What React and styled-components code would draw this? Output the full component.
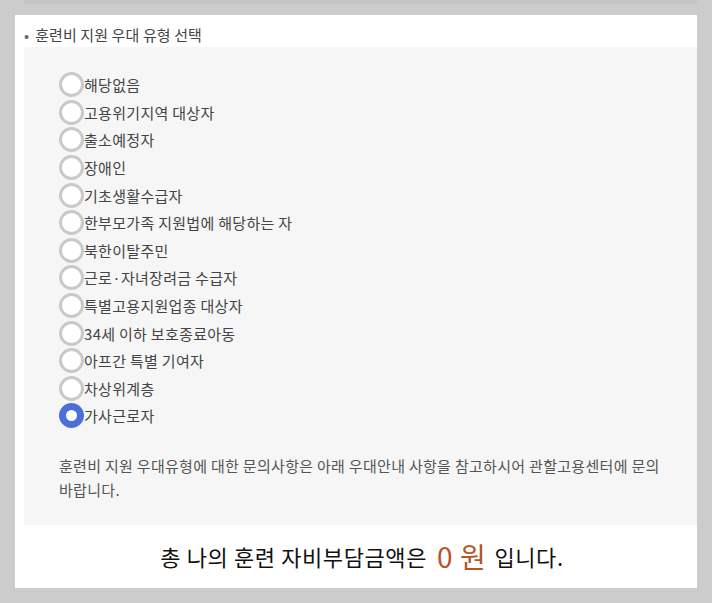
import React, { useState } from 'react'
import { styled, createGlobalStyle } from 'styled-components'

const options = [
    '해당없음',
    '고용위기지역 대상자',
    '출소예정자',
    '장애인',
    '기초생활수급자',
    '한부모가족 지원법에 해당하는 자',
    '북한이탈주민',
    '근로·자녀장려금 수급자',
    '특별고용지원업종 대상자',
    '34세 이하 보호종료아동',
    '아프간 특별 기여자',
    '차상위계층',
    '가사근로자',
];

const App = () => {

    const [selected, setSelected] = useState(options.length - 1);

  return (
    <>
    <GlobalStyle />
    <Page>
        <TopStrip />
        <Panel>
            <Title>훈련비 지원 우대 유형 선택</Title>

            <Box>
                <List>
                    { options.map((label, i) => (
                        <Option key={label}>
                            <Radio type='radio' name='favor' checked={ selected === i }
                                onChange={ () => setSelected(i) } />
                            <span>{label}</span>
                        </Option>
                    )) }
                </List>
                <Notice>
                    훈련비 지원 우대유형에 대한 문의사항은 아래 우대안내 사항을 참고하시어 관할고용센터에 문의 바랍니다.
                </Notice>
            </Box>

            <Total>
                총 나의 훈련 자비부담금액은<Amount>0 원</Amount>입니다.
            </Total>
        </Panel>
    </Page>
    </>
  )
}

const GlobalStyle = createGlobalStyle`
    html, body {
        margin: 0;
        background: #cccccc;
    }
    body {
        font-family: "Noto Sans CJK KR", "Noto Sans", sans-serif;
        color: #444;
    }
`;

const Page = styled.div`
    display: flex;
    flex-direction: column;
    padding: 0 15px 15px;
`;

const TopStrip = styled.div`
    height: 4px;
    margin-left: 9px;
    background: #c4c4c4;
`;

const Panel = styled.div`
    margin-top: 11px;
    background: #fff;
    padding-left: 9px;
`;

const Title = styled.div`
    height: 32px;
    box-sizing: border-box;
    padding-top: 9px;
    font-size: 15px;
    line-height: 22px;
    letter-spacing: 0.1px;
    color: #444;

    &::before {
        content: '•';
        color: #666;
        margin-right: 6px;
    }
`;

const Box = styled.div`
    background: #f6f6f6;
    padding: 24px 26px 23px 35px;
`;

const List = styled.div`
    display: flex;
    flex-direction: column;
`;

const Option = styled.label`
    display: flex;
    align-items: center;
    height: 27.6px;
    font-size: 15px;
    letter-spacing: 0.3px;
    color: #444;
    cursor: pointer;
`;

const Radio = styled.input`
    appearance: none;
    margin: 0;
    width: 25px;
    height: 25px;
    box-sizing: border-box;
    border-radius: 50%;
    border: 3px solid #c9c9c9;
    background: #fff;
    flex-shrink: 0;
    cursor: pointer;

    &:checked {
        border: 7px solid #4b6fd9;
    }
`;

const Notice = styled.p`
    margin: 24px 0 0;
    font-size: 15px;
    line-height: 24px;
    letter-spacing: 0.3px;
    color: #555;
`;

const Total = styled.div`
    height: 63px;
    display: flex;
    align-items: center;
    justify-content: center;
    padding-left: 3px;
    font-size: 22px;
    letter-spacing: 0.6px;
    color: #111;
    white-space: pre;
`;

const Amount = styled.span`
    margin: 0 8px 0 10px;
    font-size: 28px;
    color: #b8522a;
`;

export default App
